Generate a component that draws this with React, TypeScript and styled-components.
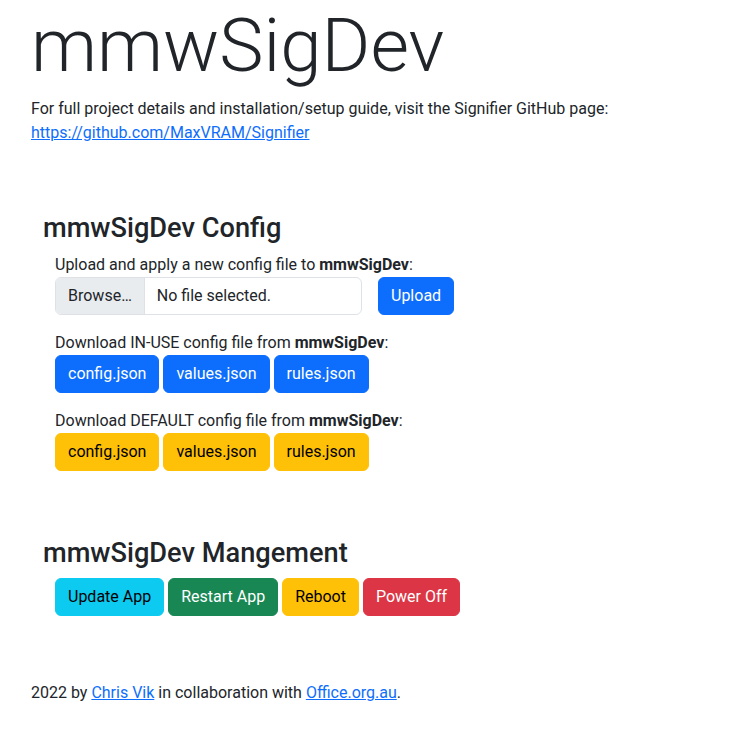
import styled, { createGlobalStyle } from 'styled-components';

const GlobalStyle = createGlobalStyle`
  body {
    margin: 0;
    font-family: Roboto, "Liberation Sans", sans-serif;
    font-size: 16px;
    line-height: 1.5;
    color: #212529;
    background: #fff;
  }
  a {
    color: #0d6efd;
    text-decoration: underline;
  }
`;

const Page = styled.div`
  padding: 1px 31px 40px;
`;

const Title = styled.h1`
  font-size: 74.5px;
  font-weight: 300;
  line-height: 1.2;
  margin: 0 0 7px;
`;

const Intro = styled.p`
  margin: 0;
`;

const Section = styled.section`
  margin-top: 66.7px;
  padding-left: 12px;
`;

const SectionTitle = styled.h2`
  font-size: 27.2px;
  font-weight: 500;
  line-height: 1.2;
  margin: 0 0 8px;
`;

const SectionBody = styled.div`
  padding-left: 12px;
  display: flex;
  flex-direction: column;
  gap: 16px;
`;

const Group = styled.div``;

const Label = styled.div``;

const ButtonRow = styled.div`
  display: flex;
  gap: 4px;
`;

const colours = {
  primary: { bg: '#0d6efd', fg: '#fff' },
  warning: { bg: '#ffc107', fg: '#000' },
  info: { bg: '#0dcaf0', fg: '#000' },
  success: { bg: '#198754', fg: '#fff' },
  danger: { bg: '#dc3545', fg: '#fff' },
};

type Variant = keyof typeof colours;

const Button = styled.button<{ $variant: Variant }>`
  font-family: inherit;
  font-size: 16px;
  line-height: 1.5;
  padding: 6px 12px;
  border: 1px solid ${(p) => colours[p.$variant].bg};
  border-radius: 6px;
  background: ${(p) => colours[p.$variant].bg};
  color: ${(p) => colours[p.$variant].fg};
  cursor: pointer;
`;

const UploadRow = styled.div`
  display: flex;
  gap: 16px;
  align-items: center;
`;

const FileInput = styled.label`
  display: flex;
  width: 307px;
  box-sizing: border-box;
  border: 1px solid #dee2e6;
  border-radius: 6px;
  overflow: hidden;
  cursor: pointer;
`;

const FileButton = styled.span`
  padding: 6px 12px;
  background: #e9ecef;
  border-right: 1px solid #dee2e6;
`;

const FileName = styled.span`
  padding: 6px 12px;
`;

const Footer = styled.footer`
  margin-top: 65px;
`;

const downloads = ['config.json', 'values.json', 'rules.json'];

export default function App() {
  return (
    <>
      <GlobalStyle />
      <Page>
        <Title>mmwSigDev</Title>
        <Intro>
          For full project details and installation/setup guide, visit the Signifier GitHub page:
          <br />
          <a href="#">https://github.com/MaxVRAM/Signifier</a>
        </Intro>

        <Section>
          <SectionTitle>mmwSigDev Config</SectionTitle>
          <SectionBody>
            <Group>
              <Label>
                Upload and apply a new config file to <b>mmwSigDev</b>:
              </Label>
              <UploadRow>
                <FileInput>
                  <FileButton>Browse…</FileButton>
                  <FileName>No file selected.</FileName>
                </FileInput>
                <Button $variant="primary">Upload</Button>
              </UploadRow>
            </Group>
            <Group>
              <Label>
                Download IN-USE config file from <b>mmwSigDev</b>:
              </Label>
              <ButtonRow>
                {downloads.map((d) => (
                  <Button key={d} $variant="primary">
                    {d}
                  </Button>
                ))}
              </ButtonRow>
            </Group>
            <Group>
              <Label>
                Download DEFAULT config file from <b>mmwSigDev</b>:
              </Label>
              <ButtonRow>
                {downloads.map((d) => (
                  <Button key={d} $variant="warning">
                    {d}
                  </Button>
                ))}
              </ButtonRow>
            </Group>
          </SectionBody>
        </Section>

        <Section>
          <SectionTitle>mmwSigDev Mangement</SectionTitle>
          <SectionBody>
            <ButtonRow>
              <Button $variant="info">Update App</Button>
              <Button $variant="success">Restart App</Button>
              <Button $variant="warning">Reboot</Button>
              <Button $variant="danger">Power Off</Button>
            </ButtonRow>
          </SectionBody>
        </Section>

        <Footer>
          2022 by <a href="#">Chris Vik</a> in collaboration with <a href="#">Office.org.au</a>.
        </Footer>
      </Page>
    </>
  );
}
